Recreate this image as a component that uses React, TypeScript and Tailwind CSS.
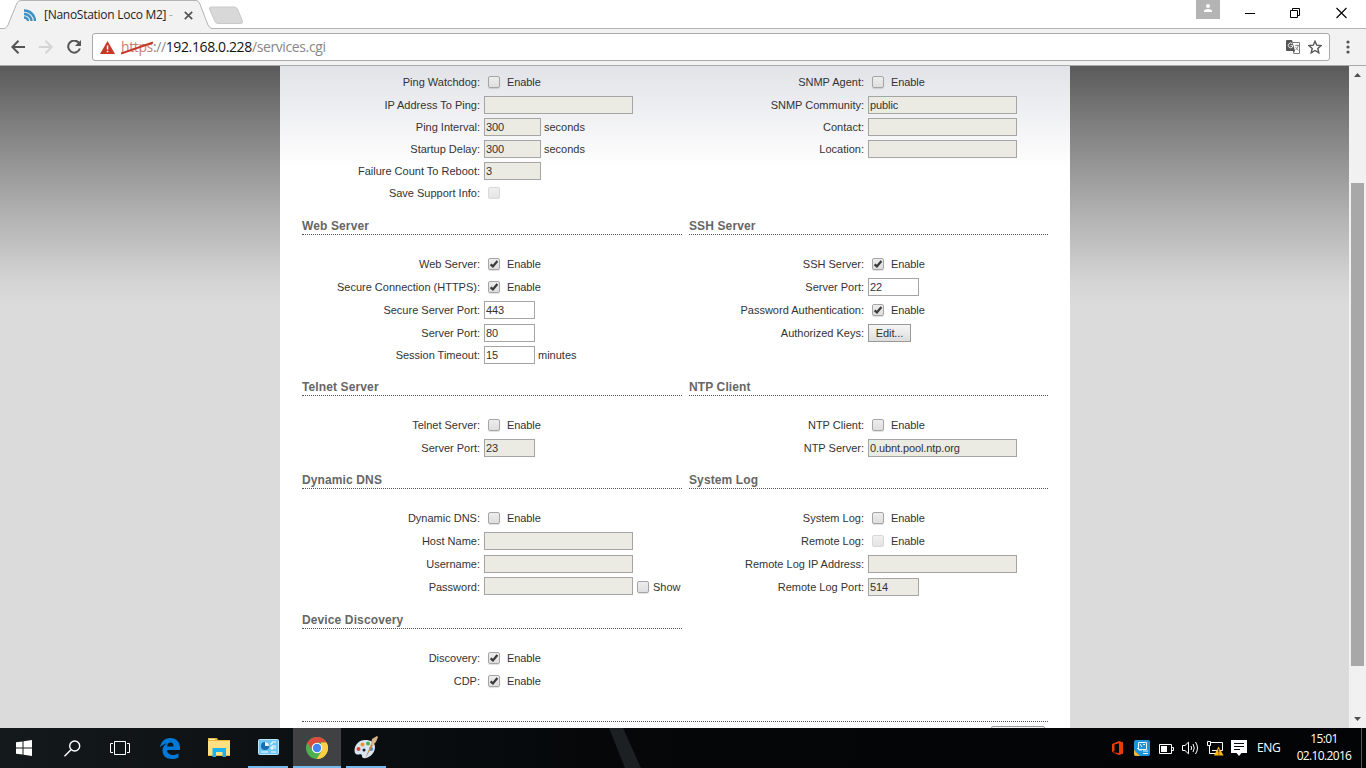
import { clsx } from "clsx";
import type { ReactNode } from "react";

type Field = {
  label: string;
  check?: "on" | "off" | "disabled";
  checkLabel?: string;
  value?: string;
  width?: string;
  editable?: boolean;
  unit?: string;
  button?: string;
  showToggle?: boolean;
  tight?: boolean;
};

const WIDE = "w-[149px]";
const MEDIUM = "w-[57px]";
const SHORT = "w-[51px]";

const rows: { height: string; left: [string, Field[]]; right: [string, Field[]] }[] = [
  {
    height: "h-[151px]",
    left: ["", [
      { label: "Ping Watchdog:", check: "off", checkLabel: "Enable" },
      { label: "IP Address To Ping:", value: "", width: WIDE, tight: true },
      { label: "Ping Interval:", value: "300", width: MEDIUM, unit: "seconds", tight: true },
      { label: "Startup Delay:", value: "300", width: MEDIUM, unit: "seconds", tight: true },
      { label: "Failure Count To Reboot:", value: "3", width: MEDIUM, tight: true },
      { label: "Save Support Info:", check: "disabled" },
    ]],
    right: ["", [
      { label: "SNMP Agent:", check: "off", checkLabel: "Enable" },
      { label: "SNMP Community:", value: "public", width: WIDE, tight: true },
      { label: "Contact:", value: "", width: WIDE, tight: true },
      { label: "Location:", value: "", width: WIDE },
    ]],
  },
  {
    height: "h-[161px]",
    left: ["Web Server", [
      { label: "Web Server:", check: "on", checkLabel: "Enable" },
      { label: "Secure Connection (HTTPS):", check: "on", checkLabel: "Enable" },
      { label: "Secure Server Port:", value: "443", width: SHORT, editable: true },
      { label: "Server Port:", value: "80", width: SHORT, editable: true, tight: true },
      { label: "Session Timeout:", value: "15", width: SHORT, editable: true, unit: "minutes" },
    ]],
    right: ["SSH Server", [
      { label: "SSH Server:", check: "on", checkLabel: "Enable" },
      { label: "Server Port:", value: "22", width: SHORT, editable: true },
      { label: "Password Authentication:", check: "on", checkLabel: "Enable" },
      { label: "Authorized Keys:", button: "Edit..." },
    ]],
  },
  {
    height: "h-[93px]",
    left: ["Telnet Server", [
      { label: "Telnet Server:", check: "off", checkLabel: "Enable" },
      { label: "Server Port:", value: "23", width: SHORT },
    ]],
    right: ["NTP Client", [
      { label: "NTP Client:", check: "off", checkLabel: "Enable" },
      { label: "NTP Server:", value: "0.ubnt.pool.ntp.org", width: WIDE },
    ]],
  },
  {
    height: "h-[140px]",
    left: ["Dynamic DNS", [
      { label: "Dynamic DNS:", check: "off", checkLabel: "Enable" },
      { label: "Host Name:", value: "", width: WIDE },
      { label: "Username:", value: "", width: WIDE, tight: true },
      { label: "Password:", value: "", width: WIDE, showToggle: true },
    ]],
    right: ["System Log", [
      { label: "System Log:", check: "off", checkLabel: "Enable" },
      { label: "Remote Log:", check: "disabled", checkLabel: "Enable" },
      { label: "Remote Log IP Address:", value: "", width: WIDE },
      { label: "Remote Log Port:", value: "514", width: SHORT },
    ]],
  },
  {
    height: "h-[110px]",
    left: ["Device Discovery", [
      { label: "Discovery:", check: "on", checkLabel: "Enable" },
      { label: "CDP:", check: "on", checkLabel: "Enable" },
    ]],
    right: ["", []],
  },
];

function Checkbox({ state }: { state: "on" | "off" | "disabled" }) {
  return (
    <span
      className={clsx(
        "flex h-3 w-3 shrink-0 items-center justify-center rounded-[2px] border bg-linear-to-b from-[#ededed] to-[#dedede]",
        state === "disabled" ? "border-[#d0d0d0] opacity-80" : "border-[#a5a5a5] shadow-[0_1px_1px_rgba(0,0,0,0.12)]",
      )}
    >
      {state === "on" && (
        <svg viewBox="0 0 10 10" className="h-2.5 w-2.5 shrink-0">
          <path d="M1.6 5.4 3.9 7.4 8.400 2" fill="none" stroke="#3a3a3a" strokeWidth="2.2" />
        </svg>
      )}
    </span>
  );
}

function FieldRow({ field, labelWidth }: { field: Field; labelWidth: string }) {
  return (
    <div className={clsx("flex h-[22px] items-center", !field.tight && "mb-px")}>
      <span className={clsx("shrink-0 text-right whitespace-nowrap", labelWidth, field.showToggle && "pt-0.5")}>
        {field.label}
      </span>
      {field.check && (
        <span className="ml-2 flex items-center gap-[7px]">
          <Checkbox state={field.check} />
          <span className="tracking-[-0.1px]">{field.checkLabel}</span>
        </span>
      )}
      {field.value !== undefined && (
        <span
          className={clsx(
            "ml-1 flex h-[18px] shrink-0 items-center border border-[#a5a5a5] pl-px tracking-[-0.1px]",
            field.width,
            field.editable ? "bg-white" : "bg-[#ebebe4]",
          )}
        >
          {field.value}
        </span>
      )}
      {field.unit && <span className="ml-[3px]">{field.unit}</span>}
      {field.button && (
        <button className="ml-1 h-[18px] w-[43px] border border-[#999] bg-linear-to-b from-[#f6f6f6] to-[#dddddd] tracking-[-0.1px]">
          {field.button}
        </button>
      )}
      {field.showToggle && (
        <span className="ml-1 flex items-center gap-1 pt-0.5">
          <Checkbox state="off" />
          Show
        </span>
      )}
    </div>
  );
}

type SectionProps = { title: string; fields: Field[]; className: string; labelWidth: string };

function Section({ title, fields, className, labelWidth }: SectionProps) {
  return (
    <section className={className}>
      {title && (
        <h2 className="mb-[18px] h-[18px] border-b border-dotted border-[#555] text-[12px] leading-[19px] font-bold tracking-[0.12px] text-[#666]">
          {title}
        </h2>
      )}
      <div className={clsx(!title && fields.length > 0 && "pt-[5px]")}>
        {fields.map((field) => (
          <FieldRow key={field.label} field={field} labelWidth={labelWidth} />
        ))}
      </div>
    </section>
  );
}

function BrowserChrome() {
  return (
    <header className="h-[66px] bg-white font-['Open_Sans',sans-serif]">
      <div className="flex h-[29px] items-start border-b border-[#b4b4b4]">
        <div className="relative flex h-[29px] w-[212px] shrink-0 items-center">
          <svg className="absolute inset-0" width="212" height="29" viewBox="0 0 212 29">
            <path d="M4 28.5C6.500 28 7 27 8 25L17 3Q18.500.5 21 .5H196Q198.500.5 199.500 3L208 25Q209.500 28.500 212 28.500V29H4Z" fill="#f2f2f2" />
            <path d="M4 28.500C6.500 28 7 27 8 25L17 3Q18.500.5 21 .5H196Q198.500.5 199.500 3L208 25Q209.500 28.500 212 28.500" fill="none" stroke="#b4b4b4" />
          </svg>
          <svg className="relative ml-6" width="12" height="12" viewBox="0 0 12 12" fill="none" stroke="#3e91c4" strokeWidth="2.400">
            <path d="M0 1.500C6 1.500 11 6 11 12M0 5C4 5 7.500 8 7.500 12M0 8.500C2 8.500 4 10 4 12" />
          </svg>
          <span className="relative ml-2 w-[132px] text-[12px] tracking-[-0.27px] whitespace-nowrap text-[#222]">
            [NanoStation Loco M2] <span className="text-[#aaa]">-</span>
          </span>
          <svg className="relative mt-px ml-2" width="9" height="9" viewBox="0 0 9 9" stroke="#555" strokeWidth="1.700">
            <path d="m.8.8 7.400 7.400M8.200.8.8 8.200" />
          </svg>
        </div>
        <svg className="-ml-1 mt-1.5 shrink-0" width="36" height="19" viewBox="0 0 36 19">
          <path d="M3 1H26Q28.500 1 29.500 3L34.500 15Q35 17.500 33 17.500H10Q8 17.500 7 15.500L1.500 3Q1 1 3 1Z" fill="#d8d8d8" stroke="#c9c9c9" />
        </svg>
        <div className="ml-auto flex h-[28px] w-[170px] items-start">
          <svg width="24" height="19" viewBox="0 0 24 19">
            <path d="M0 0H24V19H0Z" fill="#b4b4b4" />
            <circle cx="12" cy="6" r="2" fill="white" />
            <path d="M8 12V10.500Q9 9 12 9T16 10.500V12Z" fill="white" />
          </svg>
          <svg className="ml-[25px]" width="10" height="26" stroke="black"><path d="M0 13.500H10" /></svg>
          <svg className="ml-[35px]" width="11" height="26" fill="none" stroke="black">
            <path d="M.5 10.500H7.500V17.500H.5ZM2.500 10.500V8.500H9.500V15.500H7.500" />
          </svg>
          <svg className="ml-[35px]" width="11" height="26" stroke="black" strokeWidth="1.100"><path d="m.5 8 10 10M10.500 8 .5 18" /></svg>
        </div>
      </div>
      <div className="flex h-[37px] items-center border-b border-[#a9a9a9] bg-[#f2f2f2]">
        <svg className="ml-[11px]" width="14" height="14" viewBox="0 0 14 14" fill="none" stroke="#555" strokeWidth="2">
          <path d="M14 7H1.500M7.500 .8 1.300 7 7.500 13.200" />
        </svg>
        <svg className="ml-[14px]" width="14" height="14" viewBox="0 0 14 14" fill="none" stroke="#d4d4d4" strokeWidth="2">
          <path d="M0 7H12.500M6.500.8 12.700 7 6.500 13.200" />
        </svg>
        <svg className="ml-[14px]" width="15" height="14" viewBox="0 0 15 14">
          <path d="M12.200 3.300A6 6 0 1 0 12.900 8.500" fill="none" stroke="#555" strokeWidth="2" />
          <path d="M14 0V6H8Z" fill="#555" />
        </svg>
        <div className="ml-[10px] flex h-7 w-[1238px] items-center rounded-[3px] border border-[#a9a9a9] bg-white">
          <svg className="ml-[7px]" width="15" height="13" viewBox="0 0 15 13">
            <path d="M7.500 0 15 13H0Z" fill="#c53929" />
            <path d="M6.800 4.500H8.300V8.500H6.800ZM6.800 9.800H8.300V11.200H6.800Z" fill="white" />
          </svg>
          <span className="mb-px ml-1.5 text-[14px] tracking-[-0.38px] whitespace-nowrap text-[#888]">
            <span className="relative text-[#c97c73]">
              https
              <svg className="absolute top-1 left-0" width="33" height="14"><path d="M0 12.500 32 1.500" stroke="#c53929" strokeWidth="1.900" /></svg>
            </span>
            ://<span className="text-[#111]">192.168.0.228</span>/services.cgi
          </span>
          <svg className="ml-auto" width="14" height="14" viewBox="0 0 14 14">
            <path d="M6.500 2.500H13.500V13.500H7.500" fill="#fff" stroke="#777" />
            <path d="M0 1Q0 0 1 0H6L9 11H1Q0 11 0 10Z" fill="#555" />
            <path d="M6.500 3.800A2.400 2.400 0 1 0 6.500 7V5.500H4.500" fill="none" stroke="#eee" />
            <path d="M9 5.500H13M11 4.500V5.500M12.300 5.500Q11.500 8.500 9.500 10M9.500 7Q10.500 9 12.500 10.300" fill="none" stroke="#777" strokeWidth=".8" />
            <path d="M7 11H9L7.500 13.500Z" fill="#555" />
          </svg>
          <svg className="mr-[7px] ml-2" width="14" height="14" viewBox="0 0 14 14" fill="none" stroke="#555" strokeWidth="1.400">
            <path d="m7 1.300 1.700 3.900 4.400.4-3.300 2.900 1 4.300L7 10.500l-3.800 2.300 1-4.300L.9 5.600l4.400-.4Z" />
          </svg>
        </div>
        <svg className="ml-[16px]" width="4" height="14" viewBox="0 0 4 14" fill="#555">
          <circle cx="2" cy="2" r="1.600" /><circle cx="2" cy="7" r="1.600" /><circle cx="2" cy="12" r="1.600" />
        </svg>
      </div>
    </header>
  );
}

function Scrollbar() {
  return (
    <div className="flex w-[17px] shrink-0 flex-col items-center bg-[#f1f1f1]">
      <svg width="17" height="17"><path d="M5 11 8.500 7 12 11Z" fill="#505050" /></svg>
      <div className="mt-[100px] h-[483px] w-[13px] bg-[#a8a8a8]" />
      <svg className="mt-auto" width="17" height="17"><path d="M5 6 8.500 10 12 6Z" fill="#505050" /></svg>
    </div>
  );
}

function TaskButton({ children, running, active }: { children: ReactNode; running?: boolean; active?: boolean }) {
  return (
    <div
      className={clsx(
        "flex h-10 w-12 shrink-0 items-center justify-center border-b-2",
        active ? "border-[#76b9ed] bg-[#3f4142]" : "border-transparent",
      )}
    >
      <div className="relative flex h-full w-10 items-center justify-center">
        {children}
        {running && <span className="absolute -bottom-0.5 left-0 h-0.5 w-full bg-[#76b9ed]" />}
      </div>
    </div>
  );
}

function Taskbar() {
  return (
    <footer className="flex h-10 items-center bg-linear-to-r from-[#14191b] via-[#040607] to-[#030405] font-['Open_Sans',sans-serif] text-white">
      <TaskButton>
        <svg className="mt-0.5" width="16" height="16" viewBox="0 0 16 16" fill="white">
          <path d="M0 2.300 6.500 1.400V7.500H0ZM7.500 1.200 16 0V7.500H7.500ZM0 8.500H6.500V14.600L0 13.700ZM7.500 8.500H16V16L7.500 14.800Z" />
        </svg>
      </TaskButton>
      <TaskButton>
        <svg className="mt-0.5" width="17" height="17" viewBox="0 0 17 17" fill="none" stroke="white" strokeWidth="1.400">
          <circle cx="10.700" cy="6" r="5" /><path d="M7 9.700.5 16.200" />
        </svg>
      </TaskButton>
      <TaskButton>
        <svg className="mt-0.5" width="20" height="14" viewBox="0 0 20 14" fill="none" stroke="white">
          <path d="M4.500.5H15.500V13.500H4.500ZM3 2.500H.5V11.500H3M17 2.500H19.500V11.500H17" />
        </svg>
      </TaskButton>
      <div className="w-0.5" />
      <TaskButton>
        <svg className="mt-0.5" width="20" height="21" viewBox="0 0 20 21" fill="#0078d7">
          <path d="M0 9.500C.8 4 4.500 0 10.300 0 16.500 0 20 4.500 20 9.500V12H7C7.200 15.500 10 17 13 17 15 17 17 16.400 18.500 15.500V19.500C16.500 20.600 14.500 21 12 21 6 21 2.500 17.500 2.500 12.500 2.500 9.500 4 7 7 5.500 3.800 6 1.500 7.500 0 9.500ZM7.100 8.500H13.500C13.500 6 12.500 4.600 10.500 4.600 8.600 4.600 7.400 6 7.100 8.500Z" />
        </svg>
      </TaskButton>
      <div className="w-px" />
      <TaskButton>
        <svg width="22" height="19" viewBox="0 0 22 19">
          <path d="M0 0H9L10 2H22V18H0Z" fill="#e8b63a" />
          <path d="M0 3H22V17H0Z" fill="#ffe083" />
          <path d="M1 1H7V2H1Z" fill="#fff3c4" />
          <path d="M4.500 19V10H18V19H14.500V14H8V19Z" fill="#1ab2f0" />
        </svg>
      </TaskButton>
      <div className="w-px" />
      <TaskButton running>
        <svg width="21" height="16" viewBox="0 0 21 16">
          <rect x=".5" y=".5" width="20" height="15" rx="1" fill="#6cc5f2" stroke="#b9e6fb" />
          <circle cx="7" cy="7" r="4" fill="#176bae" />
          <path d="M7 7V3A4 4 0 0 1 11 7Z" fill="#e7f6fd" />
          <path d="M12 5H14V3H18M12 9H14V7H18M14 11V9H18M3 13H10M13 13H18" stroke="#fff" fill="none" />
        </svg>
      </TaskButton>
      <div className="w-px" />
      <TaskButton running active>
        <svg className="mt-0.5" width="22" height="22" viewBox="0 0 22 22">
          <circle cx="11" cy="11" r="11" fill="#4caf50" />
          <path d="M1.500 5.500A11 11 0 0 1 20.500 5.500H11L6.200 13.800Z" fill="#dd4b3e" />
          <path d="M20.500 5.500A11 11 0 0 1 10.500 22L15.800 13.800 15 5.500Z" fill="#fdd047" />
          <circle cx="11" cy="11" r="5.300" fill="#fff" />
          <circle cx="11" cy="11" r="4.200" fill="#4285f4" />
        </svg>
      </TaskButton>
      <div className="w-px" />
      <TaskButton running>
        <svg className="mt-0.5" width="24" height="24" viewBox="0 0 24 24">
          <path d="M11 4C5 4 .5 9 .5 14.500.5 18 3 19 5 18.500 7 18 8 18.500 8 20 8 22 10 22.500 12 22 17 21 21 16 21 11 21 6.500 17 4 11 4Z" fill="#d5e7f4" />
          <circle cx="4.500" cy="13" r="2" fill="#e24736" />
          <circle cx="8.500" cy="8.500" r="2" fill="#f1922e" />
          <circle cx="14" cy="7.500" r="2" fill="#54ae48" />
          <circle cx="17" cy="13" r="2" fill="#4387cb" />
          <circle cx="10" cy="14" r="1.500" fill="#152027" />
          <path d="m11 23 6-15 2 1Z" fill="#d98438" />
          <path d="m17 8 1-5 5-3 1 1-2 5-3 3Z" fill="#d9b48a" />
        </svg>
      </TaskButton>
      <svg className="ml-[216px]" width="38" height="40"><path d="M3 0 19 40H35L17 0Z" fill="#1c2022" /></svg>

      <div className="ml-auto flex h-10 items-center">
        <svg width="11" height="14" viewBox="0 0 11 14">
          <path d="M0 3 7 0 11 1.200V12.800L7 14 0 11.200 7 12V2.300L2.500 3.500V10L0 11.200Z" fill="#eb3c00" />
        </svg>
        <svg className="ml-[11px]" width="16" height="16" viewBox="0 0 16 16">
          <rect width="16" height="16" rx="2" fill="#1c94dc" />
          <path d="M0 10 6 16H2Q0 16 0 14Z" fill="#f4b32a" />
          <path d="M4.500 2.500H12.500V9.500H4.500ZM6 4 8 7M9 4.500H11M3 8 5 10H8M9 11H14M9 13.500H14" fill="none" stroke="#e6f7ff" />
        </svg>
        <svg className="mt-px ml-[9px]" width="15" height="10" viewBox="0 0 15 10">
          <path d="M.5.5H12.500V9.500H.5ZM13 3.500H14.500V6.500H13" fill="none" stroke="white" />
          <path d="M2 2H8V8H2Z" fill="white" />
        </svg>
        <svg className="ml-2" width="17" height="14" viewBox="0 0 17 14" fill="none" stroke="white">
          <path d="M.5 4.500H3L6.500 1.200V12.800L3 9.500H.5ZM9 5Q10.200 7 9 9M11 3Q13.500 7 11 11M13.500 1Q17.500 7 13.500 13" />
        </svg>
        <svg className="mt-px ml-2" width="17" height="15" viewBox="0 0 17 15">
          <path d="M4 1.500H15.500V9.500H5M.5.5H3.500V4.500H.5ZM2.500 5V12.500H8M5 12.500H9" fill="none" stroke="white" />
          <path d="M11.500 5.500 16.500 14.500H7Z" fill="#fdb813" />
          <path d="M11.800 8V11.500M11.800 12.500V13.500" stroke="#222" />
        </svg>
        <svg className="ml-[7px]" width="16" height="16" viewBox="0 0 16 16">
          <path d="M0 0H16V13H10.500L8 16 5.500 13H0Z" fill="white" />
          <path d="M3 3.500H13M3 6.500H13M3 9.500H9" stroke="#090a0b" />
        </svg>
        <span className="ml-[10px] w-6 text-[12px] tracking-[-0.4px]">ENG</span>
        <div className="mb-0.5 ml-[14px] w-[58px] text-center text-[12px] leading-[17px] tracking-[-0.65px] whitespace-nowrap">
          <div>15:01</div>
          <div>02.10.2016</div>
        </div>
        <div className="mr-1 ml-2 h-10 w-px bg-[#555]" />
      </div>
    </footer>
  );
}

export default function App() {
  return (
    <div className="flex h-[768px] w-[1366px] flex-col overflow-hidden">
      <BrowserChrome />
      <main className="flex h-[662px] overflow-hidden">
        <div className="flex flex-1 bg-[linear-gradient(#5a5a5a_0px,#7d7d7d_56px,#b2b2b2_150px,#d4d4d4_215px,#dbdbdb_241px)]">
          <div className="ml-[280px] h-[662px] w-[790px] overflow-hidden bg-[linear-gradient(#e2e3e8_0px,#ffffff_103px)] pl-[22px] font-['Liberation_Sans',Arial,sans-serif] text-[11px] leading-[14px] text-[#333]">
            {rows.map((row) => (
              <div key={row.height} className={clsx("flex gap-[7px]", row.height)}>
                <Section title={row.left[0]} fields={row.left[1]} className="w-[380px]" labelWidth="w-[178px]" />
                <Section title={row.right[0]} fields={row.right[1]} className="w-[359px]" labelWidth="w-[175px]" />
              </div>
            ))}
            <div className="flex w-[746px] justify-end border-t border-dotted border-[#555] pt-1 pr-[3px]">
              <button aria-label="Change" className="h-[18px] w-[54px] rounded-[2px] border border-[#999] bg-linear-to-b from-[#f6f6f6] to-[#dddddd]" />
            </div>
          </div>
        </div>
        <Scrollbar />
      </main>
      <Taskbar />
    </div>
  );
}
